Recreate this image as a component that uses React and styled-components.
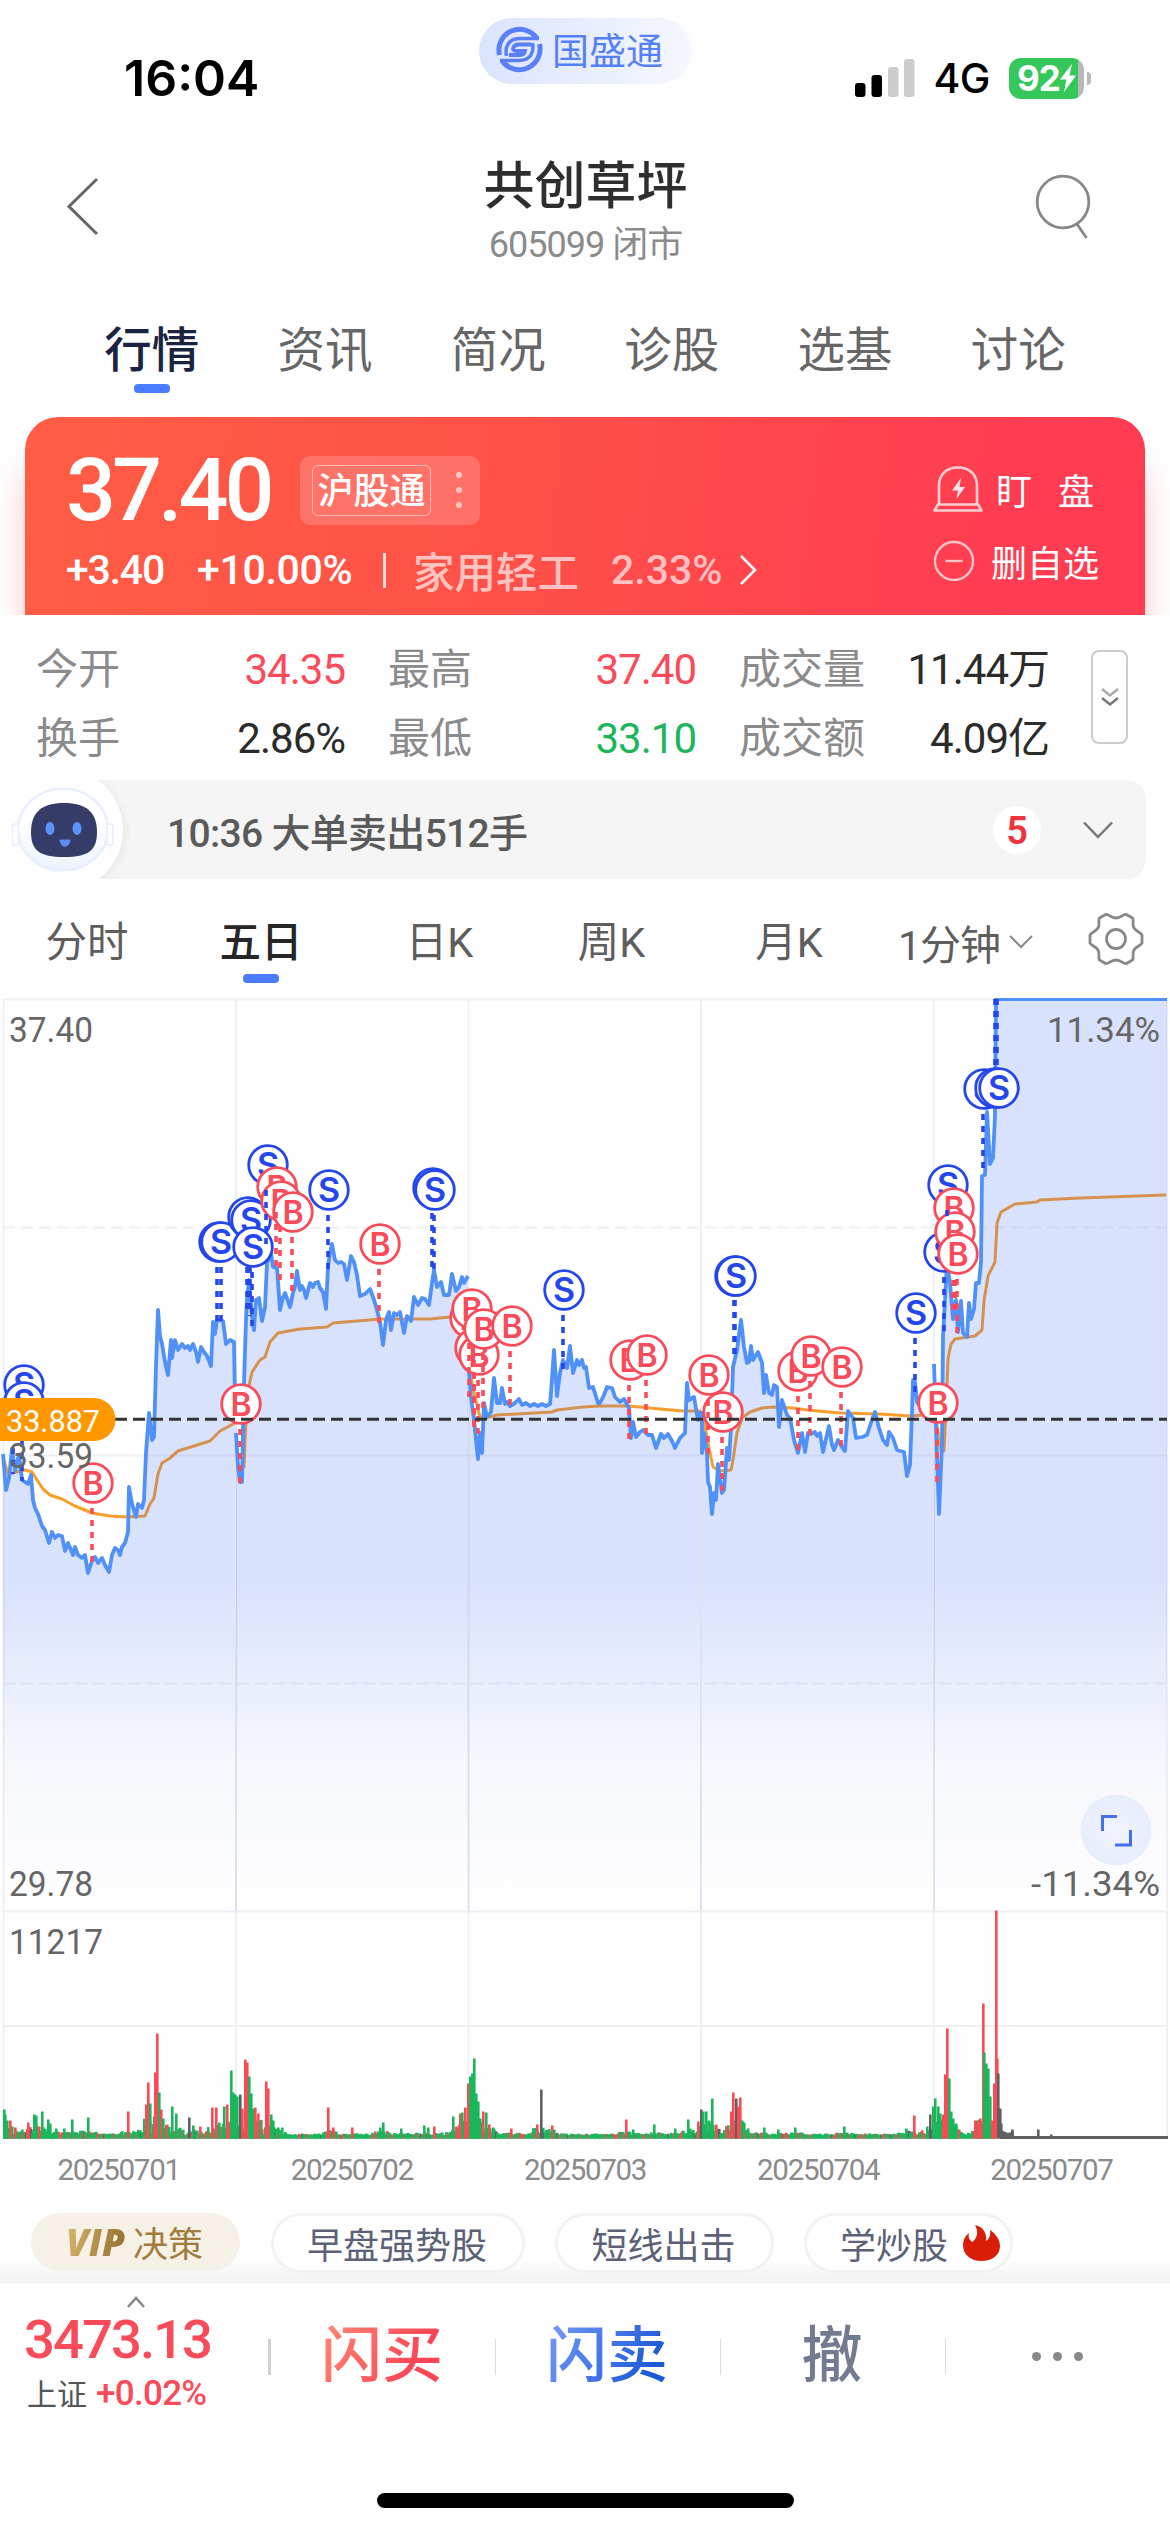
import React from 'react';
import styled, { createGlobalStyle, css } from 'styled-components';

const RED = '#f94b5a';
const GREEN = '#1bb55c';
const BLUE = '#4b7bff';

const GlobalStyle = createGlobalStyle`
  * {
    box-sizing: border-box;
  }

  body {
    margin: 0;
    background: #fefefe;
    font-family: Roboto, 'Noto Sans CJK SC', sans-serif;
    color: #333;
  }

  svg {
    display: block;
    flex: none;
  }
`;

const Page = styled.div`
  width: 1170px;
  height: 2532px;
  display: flex;
  flex-direction: column;
  overflow: hidden;
  background: #fefefe;
`;

/* ---------- status bar ---------- */

const StatusBar = styled.div`
  display: grid;
  grid-template-columns: 1fr 213px 1fr;
  height: 120px;
  padding: 18px 79px 0 124px;
  font-family: Inter, sans-serif;
  color: #000;
`;

const Clock = styled.div`
  padding-top: 30px;
  font-size: 50px;
  font-weight: 600;
  line-height: 60px;
`;

const BrandPill = styled.div`
  width: 213px;
  height: 66px;
  margin-left: -22px;
  padding: 0 0 4px 17px;
  display: flex;
  align-items: center;
  gap: 9px;
  border-radius: 33px;
  background: linear-gradient(90deg, #dae4fd, #f6f8ff);
  color: #5580f7;
  font-family: 'Noto Sans CJK SC', sans-serif;
  font-size: 37px;
  line-height: 60px;
`;

const StatusRight = styled.div`
  display: flex;
  justify-content: flex-end;
  align-items: center;
  height: 60px;
  margin-top: 30px;
`;

const Network = styled.span`
  margin: 0 19px 0 18px;
  font-size: 41px;
  font-weight: 500;
  letter-spacing: -0.5px;
`;

const Battery = styled.div`
  width: 75px;
  height: 41px;
  display: flex;
  align-items: center;
  justify-content: center;
  border-radius: 12px;
  background: linear-gradient(90deg, #35c759 69px, #b9b9bb 69px);
  color: #fff;
  font-size: 35px;
  font-weight: 700;
  letter-spacing: -1px;
`;

const BatteryNub = styled.div`
  width: 4px;
  height: 13px;
  margin-left: 3px;
  border-radius: 0 4px 4px 0;
  background: #b9b9bb;
`;

/* ---------- header ---------- */

const Header = styled.header`
  height: 172px;
  padding: 0 79px 0 66px;
  display: flex;
  justify-content: space-between;
`;

const TitleBlock = styled.div`
  display: flex;
  flex-direction: column;
  align-items: center;
  padding-top: 35px;
  margin-left: 36px;
`;

const StockName = styled.h1`
  margin: 0;
  font-size: 51px;
  font-weight: 500;
  line-height: 64px;
  color: #2e2e2e;
`;

const StockCode = styled.div`
  margin-top: 4px;
  font-size: 36px;
  line-height: 44px;
  color: #8b8b8b;
  letter-spacing: -1px;
`;

const MainTabs = styled.nav`
  display: flex;
  height: 125px;
  padding: 0 65px;
`;

const MainTab = styled.div`
  flex: 1;
  display: flex;
  flex-direction: column;
  align-items: center;
  padding-top: 28px;
  font-size: 47.5px;
  line-height: 62px;
  color: ${(p) => (p.$active ? '#1b2340' : '#666')};
  font-weight: ${(p) => (p.$active ? 500 : 400)};
`;

const Underline = styled.div`
  width: 36px;
  height: 9px;
  margin-top: 2px;
  border-radius: 4px;
  background: ${BLUE};
`;

/* ---------- price card ---------- */

const CardWrap = styled.div`
  height: 198px;
  padding: 0 25px;
  overflow: hidden;
`;

const Card = styled.section`
  height: 198px;
  padding: 33px 48px 0 41px;
  display: flex;
  justify-content: space-between;
  border-radius: 33px 33px 0 0;
  background: linear-gradient(97deg, #ff5d45 0%, #ff5148 42%, #ff3c51 88%);
  box-shadow: 0 40px 36px -10px rgba(255, 70, 75, 0.55);
  color: #fff;
`;

const PriceRow = styled.div`
  display: flex;
  align-items: center;
  height: 80px;
`;

const Price = styled.div`
  width: 234px;
  font-size: 88px;
  font-weight: 500;
  line-height: 80px;
  letter-spacing: -4px;
`;

const TagBox = styled.div`
  display: flex;
  align-items: center;
  width: 180px;
  height: 69px;
  padding-left: 12px;
  border-radius: 10px;
  background: rgba(255, 255, 255, 0.18);
`;

const Tag = styled.div`
  width: 119px;
  height: 51px;
  border: 1.5px solid rgba(255, 255, 255, 0.5);
  border-radius: 6px;
  font-size: 36px;
  font-weight: 500;
  line-height: 53px;
  text-align: center;
`;

const Dots = styled.div`
  display: flex;
  flex-direction: ${(p) => (p.$row ? 'row' : 'column')};
  gap: ${(p) => p.$gap}px;
  margin-left: ${(p) => p.$left || 0}px;

  i {
    width: ${(p) => p.$size}px;
    height: ${(p) => p.$size}px;
    border-radius: 50%;
    background: ${(p) => p.$color};
  }
`;

const ChangeRow = styled.div`
  display: flex;
  align-items: center;
  height: 50px;
  margin-top: 15px;
  font-size: 41px;
  letter-spacing: -0.6px;
  white-space: nowrap;
`;

const Change = styled.span`
  width: ${(p) => p.$w}px;
  font-weight: 500;
  letter-spacing: ${(p) => p.$ls}px;
`;

const Bar = styled.span`
  width: 3px;
  height: 35px;
  margin-right: 27px;
  background: rgba(255, 255, 255, 0.8);
`;

const Sector = styled.span`
  width: ${(p) => p.$w}px;
  font-size: ${(p) => p.$size || 41}px;
  font-weight: 500;
  letter-spacing: 0;
  color: rgba(255, 255, 255, 0.66);
`;

const CardActions = styled.div`
  display: flex;
  flex-direction: column;
  gap: 24px;
  width: 164px;
  padding-top: 15px;
`;

const CardAction = styled.div`
  display: flex;
  align-items: center;
  height: 48px;
  font-size: 36px;
  white-space: nowrap;

  span {
    margin-left: ${(p) => p.$gap}px;
  }
`;

/* ---------- quote stats ---------- */

const Stats = styled.section`
  display: flex;
  height: 165px;
  padding: 20px 42px 0 36px;
`;

const StatGrid = styled.div`
  width: 1013px;
  display: grid;
  grid-template-columns: 309px 351px 353px;
  grid-auto-rows: 69px;
`;

const Stat = styled.div`
  display: flex;
  justify-content: space-between;
  padding-left: ${(p) => (p.$first ? 0 : 43)}px;
  font-size: 42px;
  line-height: 69px;
  color: #8b8b8b;

  b {
    font-weight: 400;
    font-size: 42px;
    color: ${(p) => p.$color || '#2b2b2b'};
    letter-spacing: -1px;
  }
`;

const ExpandButton = styled.div`
  display: flex;
  align-items: center;
  justify-content: center;
  width: 38px;
  height: 94px;
  margin: 15px 0 0 42px;
  border: 2.5px solid #cbcbcb;
  border-radius: 8px;
`;

const AlertBar = styled.div`
  display: flex;
  align-items: center;
  width: 1146px;
  height: 99px;
  border-radius: 0 20px 20px 0;
  background: #f5f5f5;
  overflow: hidden;
`;

const AlertText = styled.div`
  width: 862px;
  padding-left: 36px;
  font-size: 39px;
  font-weight: 500;
  color: #5a5a5a;
  letter-spacing: -0.7px;
`;

const AlertCount = styled.div`
  width: 48px;
  height: 48px;
  margin-right: 42px;
  border-radius: 50%;
  background: #fff;
  color: #f0343f;
  font-size: 38px;
  font-weight: 600;
  line-height: 51px;
  text-align: center;
`;

/* ---------- period tabs ---------- */

const Periods = styled.nav`
  display: flex;
  height: 119px;
  padding: 35px 0 0;
`;

const Period = styled.div`
  display: flex;
  flex-direction: column;
  align-items: center;
  width: ${(p) => p.$w}px;
  font-size: 41.5px;
  line-height: 58px;
  color: #5e5e5e;
  white-space: nowrap;

  ${(p) =>
    p.$active &&
    css`
      color: #262626;
      font-weight: 500;
    `}
`;

const MinutePicker = styled.div`
  display: flex;
  align-items: center;
  gap: 9px;
  width: 190px;
  height: 56px;
  padding-left: 12px;
  font-size: 41px;
  letter-spacing: -1px;
  color: #5e5e5e;
  white-space: nowrap;
`;

const Dates = styled.div`
  display: flex;
  height: 55px;
  padding: 0 2px;
  font-size: 29.5px;
  line-height: 60px;
  color: #8a8a8a;
  letter-spacing: -1.3px;

  span {
    flex: 1;
    text-align: center;
  }
`;

/* ---------- chips and footer ---------- */

const Chips = styled.div`
  display: flex;
  align-items: flex-start;
  height: 88px;
  padding: 18px 0 0 31px;
  background: linear-gradient(180deg, #fefefe 64px, #f1f1f1 88px);
`;

const Chip = styled.div`
  display: flex;
  align-items: center;
  justify-content: center;
  width: ${(p) => p.$w}px;
  height: 60px;
  margin-right: 30px;
  padding: 0 2px 1px 0;
  border: 3px solid #f2f2f4;
  border-radius: 30px;
  background: #fefefe;
  color: #5d6178;
  font-size: 36px;
  white-space: nowrap;

  svg {
    margin-left: 15px;
  }

  ${(p) =>
    p.$hot &&
    css`
      justify-content: flex-start;
      padding-left: 33px;
    `}

  ${(p) =>
    p.$vip &&
    css`
      height: 58px;
      margin-right: 31px;
      border: 0;
      background: #f5f1e6;
      color: #a07d3c;
      font-size: 35px;
    `}
`;

const Vip = styled.b`
  margin-right: 5px;
  padding-right: 3px;
  font-family: 'Open Sans', sans-serif;
  font-size: 37px;
  font-style: italic;
  font-weight: 800;
  background: linear-gradient(100deg, #d9b76c, #8c6a2a);
  background-clip: text;
  color: transparent;
`;

const Footer = styled.footer`
  height: 249px;
  display: flex;
  flex-direction: column;
  justify-content: space-between;
  align-items: center;
  padding-bottom: 24px;
`;

const FooterRow = styled.div`
  display: flex;
  width: 1170px;
`;

const IndexBox = styled.div`
  width: 268px;
  padding: 13px 0 0 24px;
  color: ${RED};

  svg {
    margin-left: 102px;
  }
`;

const IndexValue = styled.div`
  font-size: 54.5px;
  font-weight: 500;
  line-height: 62px;
  letter-spacing: -2px;
`;

const IndexChange = styled.div`
  display: flex;
  align-items: baseline;
  gap: 9px;
  margin-left: 3px;
  font-size: 35px;
  font-weight: 500;
  line-height: 48px;
  letter-spacing: -0.7px;

  span {
    font-size: 30px;
    font-weight: 400;
    letter-spacing: 0;
    color: #555;
  }
`;

const TradeButton = styled.div`
  flex: 1;
  display: flex;
  align-items: center;
  justify-content: center;
  height: 36px;
  margin-top: 56px;
  padding: 0 2px 2px 0;
  border-left: ${(p) => (p.$bold ? '3px solid #d2d2d2' : '1px solid #dcdcdc')};
  font-size: 61px;
  font-weight: 500;

  span {
    line-height: 80px;
    background: ${(p) => p.$fill};
    background-clip: text;
    color: transparent;
  }
`;

const HomeIndicator = styled.div`
  width: 417px;
  height: 15px;
  border-radius: 8px;
  background: #000;
`;

/* ---------- data ---------- */

const TABS = ['行情', '资讯', '简况', '诊股', '选基', '讨论'];

const STATS = [
  ['今开', '34.35', RED],
  ['最高', '37.40', RED],
  ['成交量', '11.44万'],
  ['换手', '2.86%'],
  ['最低', '33.10', GREEN],
  ['成交额', '4.09亿'],
];

const PERIODS = [
  ['分时', 174],
  ['五日', 174],
  ['日K', 183],
  ['周K', 161],
  ['月K', 194],
];

const DAYS = ['20250701', '20250702', '20250703', '20250704', '20250707'];

// one polyline per trading day
const PRICE = [
  '3,1454 6,1490 9,1478 12,1449 15,1470 19,1455 22,1480 25,1482 28,1484 31,1475 33,1500 35,1508 38,1514 42,1526 45,1530 49,1543 52,1532 55,1538 58,1535 62,1536 65,1551 68,1543 73,1555 75,1547 78,1555 82,1558 85,1555 88,1573 92,1561 95,1557 98,1563 102,1558 105,1565 109,1572 112,1555 115,1548 118,1550 120,1555 122,1547 125,1543 128,1532 129,1487 132,1504 136,1517 138,1504 142,1508 144,1500 146,1453 149,1413 152,1440 154,1437 156,1366 158,1310 160,1336 162,1344 165,1362 168,1375 171,1340 172,1358 175,1340 178,1350 182,1344 185,1348 188,1346 190,1350 193,1344 196,1352 198,1362 201,1347 204,1352 207,1356 211,1366 213,1322 215,1334 217,1320 223,1321 226,1344 230,1340 234,1342 235,1400',
  '236,1433 238,1467 240,1482 242,1482 244,1383 246,1320 247,1300 249,1280 252,1317 254,1330 256,1300 259,1298 262,1321 265,1307 267,1263 271,1253 273,1267 277,1268 280,1310 283,1297 285,1293 290,1307 293,1293 295,1287 297,1271 300,1290 302,1286 304,1290 306,1298 310,1283 313,1287 315,1283 318,1282 320,1288 323,1292 326,1309 328,1267 330,1253 332,1244 335,1260 338,1263 341,1262 344,1264 347,1280 351,1256 354,1262 357,1275 360,1296 365,1294 370,1289 374,1300 377,1310 380,1322 383,1345 386,1320 389,1312 391,1330 394,1313 397,1315 400,1312 404,1333 407,1316 411,1321 414,1297 418,1305 422,1298 425,1299 429,1305 432,1283 434,1270 437,1287 441,1282 444,1295 449,1295 452,1274 456,1291 459,1287 462,1277 464,1283 468,1276',
  '469,1372 471,1397 474,1420 478,1459 480,1433 482,1453 484,1403 487,1417 491,1412 494,1378 497,1403 500,1403 502,1388 505,1404 507,1402 510,1406 515,1403 519,1399 522,1405 526,1403 530,1406 534,1404 538,1406 542,1404 546,1406 550,1404 551,1393 554,1350 557,1396 560,1373 563,1360 567,1368 570,1346 573,1373 577,1360 579,1365 582,1360 584,1368 586,1367 589,1388 593,1387 598,1403 600,1403 604,1395 607,1387 612,1388 615,1397 620,1402 624,1399 629,1408 631,1438 633,1422 636,1437 640,1432 643,1430 648,1435 652,1435 656,1448 661,1434 664,1438 668,1434 672,1441 675,1448 680,1438 685,1433 687,1383 689,1400 694,1397 698,1420 700,1411',
  '702,1411 702,1453 704,1433 707,1453 708,1482 710,1487 712,1514 714,1493 716,1500 718,1464 722,1493 724,1490 727,1448 729,1460 731,1427 733,1367 737,1350 741,1320 744,1347 747,1363 749,1362 751,1346 753,1360 758,1352 762,1363 764,1393 766,1375 769,1393 772,1395 774,1385 777,1387 779,1427 782,1400 787,1415 790,1418 794,1440 798,1453 802,1433 805,1452 808,1433 811,1434 815,1432 817,1436 820,1433 823,1452 829,1426 832,1445 834,1450 838,1440 842,1447 845,1451 848,1411 853,1418 856,1438 862,1437 867,1435 872,1420 875,1412 879,1428 883,1440 887,1445 889,1432 893,1438 897,1450 904,1452 907,1476 910,1465 912,1413 913,1380 915,1382 917,1402 924,1412 933,1405',
  '934,1364 936,1426 939,1514 942,1444 943,1337 945,1301 947,1263 950,1283 953,1319 956,1300 958,1332 961,1301 963,1333 967,1337 969,1303 971,1319 974,1309 976,1283 979,1283 981,1262 982,1176 985,1175 987,1112 990,1164 993,1158 995,1116 996,999 1167,999',
];

const AVERAGE = [
  '3,1457 8,1474 25,1470 32,1472 37,1480 43,1489 50,1495 62,1499 75,1506 92,1513 110,1516 127,1517 145,1516 150,1504 154,1498 158,1474 162,1463 170,1458 178,1451 194,1446 210,1441 220,1431 235,1423',
  '237,1455 239,1468 244,1467 246,1420 248,1390 252,1372 260,1360 265,1357 270,1342 278,1333 300,1329 327,1327 333,1323 357,1321 380,1319 430,1319 450,1317 468,1317',
  '470,1373 475,1397 480,1417 490,1417 497,1415 552,1412 557,1410 583,1407 600,1406 627,1406 640,1407 660,1409 683,1411 701,1411',
  '703,1416 705,1427 710,1453 713,1467 720,1471 731,1470 733,1460 737,1433 742,1418 750,1412 762,1408 773,1407 793,1408 807,1410 840,1413 880,1414 910,1416 923,1415 933,1414',
  '935,1400 937,1425 941,1451 944,1451 946,1409 948,1359 951,1344 955,1339 975,1336 982,1330 984,1301 988,1276 995,1262 997,1223 1001,1212 1015,1204 1037,1202 1040,1200 1080,1198 1166,1195',
];

// side, centre x, centre y, then the stem: x, from, to
const MARKS = [
  ['S', 24, 1385, 13, 1448, 1474],
  ['S', 24, 1402, 22, 1441, 1481],
  ['B', 93, 1483, 92, 1508, 1562],
  ['S', 219, 1242, 217, 1267, 1321],
  ['S', 221, 1242, 221, 1267, 1321],
  ['S', 248, 1217, 247, 1267, 1311],
  ['S', 251, 1220, 250, 1267, 1316],
  ['S', 268, 1165, 266, 1190, 1244],
  ['S', 253, 1247, 252, 1272, 1326],
  ['B', 277, 1187, 276, 1212, 1266],
  ['B', 281, 1201, 280, 1226, 1280],
  ['B', 293, 1212, 292, 1237, 1291],
  ['S', 329, 1190, 328, 1215, 1269],
  ['B', 380, 1244, 379, 1269, 1323],
  ['S', 433, 1188, 432, 1213, 1267],
  ['S', 435, 1190, 434, 1215, 1269],
  ['B', 241, 1404, 240, 1429, 1483],
  ['B', 470, 1318, 469, 1343, 1397],
  ['B', 472, 1309, 474, 1360, 1423],
  ['B', 475, 1348, 474, 1373, 1427],
  ['B', 479, 1355, 478, 1380, 1434],
  ['B', 484, 1329, 483, 1354, 1408],
  ['B', 512, 1326, 510, 1351, 1405],
  ['S', 564, 1290, 563, 1315, 1369],
  ['B', 630, 1360, 629, 1385, 1439],
  ['B', 647, 1355, 646, 1380, 1434],
  ['B', 709, 1375, 708, 1400, 1454],
  ['B', 723, 1412, 722, 1437, 1491],
  ['S', 735, 1276, 734, 1300, 1354],
  ['S', 736, 1276, 735, 1300, 1354],
  ['B', 798, 1371, 798, 1396, 1450],
  ['B', 811, 1356, 810, 1381, 1435],
  ['B', 842, 1367, 841, 1392, 1446],
  ['S', 916, 1313, 915, 1338, 1392],
  ['B', 938, 1403, 937, 1428, 1482],
  ['S', 944, 1252, 944, 1277, 1331],
  ['S', 948, 1185, 947, 1210, 1216],
  ['B', 954, 1208, 953, 1280, 1310],
  ['B', 955, 1232, 955, 1280, 1316],
  ['B', 958, 1254, 957, 1279, 1333],
  ['S', 984, 1089, 983, 1114, 1168],
  ['S', 995, 1088, 995, 999, 1066],
  ['S', 999, 1088, 997, 999, 1066],
];

const VOLUME_COLORS = { r: '#fb4a55', g: GREEN, k: '#5f6062' };

// x:height:colour
const SPIKES =
  '4:29:g 5:24:g 7:18:g 10:18:r 15:11:r 22:9:g 28:16:r 34:24:g 36:23:g 39:12:r 42:27:g 48:19:g 50:15:g 56:10:g 64:10:g 72:19:g 82:8:g 88:21:g 128:27:r 144:20:g 146:34:r 148:56:r 150:35:g 154:22:g 155:66:r 157:105:r 159:46:g 161:29:r 163:20:g 166:12:r 172:32:g 176:25:g 179:10:g 189:21:k 193:13:g 200:12:r 212:31:r 216:31:r 219:16:g 224:32:g 227:34:r 231:68:g 233:46:g 235:44:g 237:42:g 240:44:k 242:30:r 245:79:r 247:76:r 249:62:g 251:45:g 253:30:g 255:31:r 258:25:r 260:18:g 266:57:r 268:50:r 271:24:g 273:18:g 278:11:g 282:11:g 328:31:r 333:11:r 352:11:r 380:11:g 383:16:g 401:10:g 424:13:g 428:11:g 434:12:r 453:22:g 456:12:r 460:25:r 462:26:g 465:31:r 468:55:r 470:62:g 472:65:g 474:80:g 476:45:g 478:37:g 480:20:g 483:27:r 486:26:g 489:14:r 493:11:g 511:10:r 537:14:r 541:49:k 552:13:r 554:9:g 626:19:r 633:9:g 654:14:g 675:10:g 688:19:g 690:10:g 698:17:r 701:29:k 703:27:g 706:27:g 709:18:g 712:40:g 716:14:r 726:12:r 731:27:r 733:46:r 736:40:k 738:32:r 740:41:r 742:18:g 748:10:g 764:11:g 778:9:g 795:11:g 844:12:g 906:10:g 914:23:r 930:24:k 933:32:g 935:40:g 938:32:g 940:25:g 943:24:r 945:64:r 947:110:r 949:60:g 951:27:g 953:20:g 956:12:g 975:18:r 980:20:r 983:135:r 984:86:g 986:75:g 988:70:g 990:42:g 992:18:r 994:55:r 996:228:r 997:80:r 998:65:k 1000:30:k 1001:15:k 1012:9:k 1038:9:k 1051:4:k';

const spikes = SPIKES.split(' ').map((s) => {
  const [x, h, c] = s.split(':');
  return [Number(x), Number(h), c];
});

// low trades between the spikes
const baseVolume = [];
for (let x = 4; x < 996; x += 1) {
  const n = Math.abs(Math.sin(x * 12.9898) * 43758.5453) % 1;
  const m = Math.abs(Math.sin(x * 78.233) * 12543.123) % 1;
  const near = spikes.reduce((s, [sx, sh]) => s + (Math.abs(sx - x) < 9 ? sh : 0), 0);
  const h = 3 + n * (2 + Math.min(near * 0.09, 14));
  baseVolume.push([x, h, m < 0.75 ? 'g' : m < 0.96 ? 'r' : 'k']);
}

const BOTTOM = 2138.5;

const areaOf = (line) => {
  const pts = line.split(' ');
  const x0 = pts[0].split(',')[0];
  const x1 = pts[pts.length - 1].split(',')[0];
  return `${x0},1911 ${line} ${x1},1911`;
};

/* ---------- drawings ---------- */

const Mark = ({ side, x, y }) => {
  const color = side === 'S' ? '#2446ec' : RED;
  return (
    <g>
      <circle cx={x} cy={y} r="19.3" fill="#fff" stroke={color} strokeWidth="2.8" />
      <text
        x={x}
        y={y + 12}
        textAnchor="middle"
        fontFamily="Inter, sans-serif"
        fontSize={side === 'S' ? 34 : 32}
        fontWeight="600"
        fill={color}
      >
        {side}
      </text>
    </g>
  );
};

const Label = ({ x, y, w, children, fill = '#666', size = 35 }) => (
  <text
    x={x}
    y={y}
    fontSize={size}
    fill={fill}
    textLength={w}
    lengthAdjust="spacingAndGlyphs"
  >
    {children}
  </text>
);

const Chart = () => (
  <svg width="1170" height="1142" viewBox="0 998 1170 1142">
    <defs>
      <linearGradient id="area" gradientUnits="userSpaceOnUse" x1="0" y1="999" x2="0" y2="1911">
        <stop offset="0" stopColor="#265afa" stopOpacity="0.17" />
        <stop offset="0.64" stopColor="#265afa" stopOpacity="0.17" />
        <stop offset="0.84" stopColor="#265afa" stopOpacity="0.035" />
        <stop offset="1" stopColor="#265afa" stopOpacity="0" />
      </linearGradient>
      <radialGradient id="fs">
        <stop offset="0" stopColor="#f1f4ff" />
        <stop offset="1" stopColor="#e8edfd" />
      </radialGradient>
    </defs>

    <g stroke="#f0f0f4" strokeWidth="2" fill="none">
      <path d="M3 999.5H1167M3 1455.5H1167M3 1911.5H1167M3 2026H1167" />
      <path d="M3.5 999V2139M236 999V2139M468.5 999V2139M701 999V2139M934 999V2139M1167 999V2139" />
      <path d="M3 1227.5H1167M3 1683.5H1167" strokeDasharray="12 6" />
    </g>

    {AVERAGE.map((line) => (
      <polyline key={line} points={line} fill="none" stroke="#f99d2c" strokeWidth="3" strokeLinejoin="round" />
    ))}
    {PRICE.map((line) => (
      <polygon key={line} points={areaOf(line)} fill="url(#area)" />
    ))}
    <path d="M236 1420V1911M468.5 1380V1911M701 1420V1911M934 1400V1911" stroke="#8fa4dc" strokeOpacity="0.22" strokeWidth="1.5" />
    {PRICE.map((line) => (
      <polyline key={line} points={line} fill="none" stroke="#4f90f9" strokeWidth="3.8" strokeLinejoin="round" />
    ))}

    {MARKS.map(([side, x, y], i) => (
      <Mark key={i} side={side} x={x} y={y} />
    ))}
    {MARKS.map(([side, , , sx, from, to], i) => (
      <path
        key={i}
        d={`M${sx} ${from}V${to}`}
        stroke={side === 'S' ? '#2446ec' : RED}
        strokeWidth="3.6"
        strokeDasharray="6 6"
      />
    ))}

    <path d="M115 1419.3H1167" stroke="#333" strokeWidth="3" strokeDasharray="12 6" />
    <path d="M0 1398H94A21.5 21.5 0 0 1 94 1441H0Z" fill="#ff9800" />
    <Label x="6" y="1432" w="94" fill="#fff" size={32}>33.887</Label>

    <Label x="9" y="1041.5" w="84">37.40</Label>
    <Label x="9" y="1467.5" w="84">33.59</Label>
    <Label x="9" y="1895.5" w="84">29.78</Label>
    <Label x="9" y="1953.5" w="94">11217</Label>
    <Label x="1047" y="1041.5" w="113">11.34%</Label>
    <Label x="1031" y="1895.5" w="129">-11.34%</Label>

    <circle cx="1116" cy="1830" r="35.5" fill="url(#fs)" />
    <path d="M1102.5 1831V1816.5H1117M1115 1845H1130.5V1830" fill="none" stroke="#4470f0" strokeWidth="3" />

    {[...baseVolume, ...spikes].map(([x, h, c], i) => (
      <rect key={i} x={x - 1} y={BOTTOM - h} width="2.6" height={h} fill={VOLUME_COLORS[c]} />
    ))}
    <path d="M1000 2137.5H1168" stroke="#5f6062" strokeWidth="3" />
    <path d="M1001 2137V2130L1008 2133L1014 2131V2137Z" fill="#5f6062" />
  </svg>
);

const BrandIcon = () => (
  <svg width="47" height="47" viewBox="0 0 47 47" fill="none" stroke="#5a7ff8">
    <path d="M3.5 29A20.8 20.8 0 0 1 41 12.5" strokeWidth="5" />
    <path d="M43.500 18A20.800 20.800 0 0 1 6 34.500" strokeWidth="5" />
    <path d="M43 12.500H24C13 12.500 8.500 20 10.500 30" strokeWidth="3.500" />
    <path d="M4 34.500H23C34 34.500 38.500 27 36.500 17" strokeWidth="3.500" />
    <path d="M35 18.500H23C17 18.500 14.500 25 20 25H29C28.500 28 27 29 24 29H13" strokeWidth="3.800" />
  </svg>
);

const Robot = () => (
  <svg width="131" height="99" viewBox="0 0 131 99">
    <defs>
      <linearGradient id="head" x1="0" y1="0" x2="0" y2="1">
        <stop offset="0.4" stopColor="#fff" />
        <stop offset="1" stopColor="#ecf2ff" />
      </linearGradient>
      <radialGradient id="halo">
        <stop offset="0.84" stopColor="#e8e8ea" />
        <stop offset="1" stopColor="#f5f5f5" />
      </radialGradient>
    </defs>
    <circle cx="65" cy="52" r="66" fill="url(#halo)" />
    <rect width="40" height="99" fill="#fefefe" />
    <circle cx="61" cy="50" r="62" fill="#fefefe" />
    <ellipse cx="63" cy="49.5" rx="45" ry="41" fill="url(#head)" stroke="#e9effe" strokeWidth="2.5" />
    <rect x="12.5" y="44" width="6" height="21" rx="2" fill="#fff" stroke="#e6edfd" strokeWidth="1.5" />
    <rect x="107" y="44" width="6" height="21" rx="2" fill="#fff" stroke="#e6edfd" strokeWidth="1.5" />
    <path d="M64 23C86 23 97 32 97 52C97 70 89 77 64 77C39 77 31 70 31 52C31 32 42 23 64 23Z" fill="#363c68" />
    <ellipse cx="50" cy="48.5" rx="4.5" ry="6.5" fill="#5b93fb" />
    <ellipse cx="77" cy="48.5" rx="4.5" ry="6.5" fill="#5b93fb" />
    <path d="M59.5 59.5H70.5C70 69 60 69 59.5 59.5Z" fill="#5b8cf5" />
  </svg>
);

const Chevron = ({ w, h, d, color, width = 2.5 }) => (
  <svg width={w} height={h} fill="none" stroke={color} strokeWidth={width}>
    <path d={d} />
  </svg>
);

const App = () => {
  return (
    <>
      <GlobalStyle />
      <Page>
        <StatusBar>
          <Clock>16:04</Clock>
          <BrandPill>
            <BrandIcon />
            国盛通
          </BrandPill>
          <StatusRight>
            <svg width="60" height="38" viewBox="0 0 60 38">
              <rect y="24" width="10.5" height="14" rx="3" />
              <rect x="16.5" y="16" width="10.5" height="22" rx="3" />
              <rect x="33" y="8" width="10.5" height="30" rx="3" fill="#ccc" />
              <rect x="49" width="10.5" height="38" rx="3" fill="#ccc" />
            </svg>
            <Network>4G</Network>
            <Battery>
              92
              <svg width="16" height="28" viewBox="0 0 16 28">
                <path d="M12 0L0 15.5H6.5L4 28L16 11.5H9.5Z" fill="#fff" />
              </svg>
            </Battery>
            <BatteryNub />
          </StatusRight>
        </StatusBar>

        <Header>
          <svg width="34" height="172" fill="none" stroke="#666" strokeWidth="3">
            <path d="M31 59L3 86.5L31 114" />
          </svg>
          <TitleBlock>
            <StockName>共创草坪</StockName>
            <StockCode>605099 闭市</StockCode>
          </TitleBlock>
          <svg width="56" height="172" fill="none" stroke="#888" strokeWidth="2.8">
            <circle cx="28" cy="82" r="25.8" />
            <path d="M42 104L51.5 118" />
          </svg>
        </Header>

        <MainTabs>
          {TABS.map((tab, i) => (
            <MainTab key={tab} $active={i === 0}>
              {tab}
              {i === 0 && <Underline />}
            </MainTab>
          ))}
        </MainTabs>

        <CardWrap>
          <Card>
            <div>
              <PriceRow>
                <Price>37.40</Price>
                <TagBox>
                  <Tag>沪股通</Tag>
                  <Dots $size={6} $gap={9} $left={25} $color="rgba(255,255,255,.6)">
                    <i />
                    <i />
                    <i />
                  </Dots>
                </TagBox>
              </PriceRow>
              <ChangeRow>
                <Change $w={131} $ls={-1.2}>+3.40</Change>
                <Change $w={186} $ls={-0.3}>+10.00%</Change>
                <Bar />
                <Sector $w={198} $size={41.5}>家用轻工</Sector>
                <Sector $w={128}>2.33%</Sector>
                <Chevron w={20} h={32} d="M2 2L16 16L2 30" color="#fff" />
              </ChangeRow>
            </div>
            <CardActions>
              <CardAction $gap={13}>
                <svg width="50" height="46" viewBox="0 0 50 46" fill="none" stroke="rgba(255,255,255,.75)" strokeWidth="2.6">
                  <path d="M6 38V20C6 8 14 1.5 25 1.5S44 8 44 20V38" />
                  <path d="M5 38.5H45L48.5 44.5H1.5Z" strokeLinejoin="round" />
                  <path d="M28 12L19 24.5H25L23.5 33L32 21H26.5Z" fill="rgba(255,255,255,.85)" stroke="none" />
                </svg>
                <span style={{ wordSpacing: 17 }}>盯 盘</span>
              </CardAction>
              <CardAction $gap={16}>
                <svg width="42" height="42" fill="none" stroke="rgba(255,255,255,.7)" strokeWidth="2.3">
                  <circle cx="21" cy="21" r="19" />
                  <path d="M12.5 21H29.5" />
                </svg>
                <span>删自选</span>
              </CardAction>
            </CardActions>
          </Card>
        </CardWrap>

        <Stats>
          <StatGrid>
            {STATS.map(([name, value, color], i) => (
              <Stat key={name} $first={i % 3 === 0} $color={color}>
                {name}
                <b>{value}</b>
              </Stat>
            ))}
          </StatGrid>
          <ExpandButton>
            <svg width="20" height="20" fill="none" strokeWidth="2.5">
              <path d="M2 2L10 8.5L18 2" stroke="#aaa" />
              <path d="M2 11L10 17.5L18 11" stroke="#777" />
            </svg>
          </ExpandButton>
        </Stats>

        <AlertBar>
          <Robot />
          <AlertText>10:36 大单卖出512手</AlertText>
          <AlertCount>5</AlertCount>
          <Chevron w={30} h={18} d="M1 1.5L15 16L29 1.5" color="#777" />
        </AlertBar>

        <Periods>
          {PERIODS.map(([name, w]) => (
            <Period key={name} $w={w} $active={name === '五日'}>
              {name}
              {name === '五日' && <Underline />}
            </Period>
          ))}
          <MinutePicker>
            <span>1分钟</span>
            <Chevron w={24} h={14} d="M1 1L12 12L23 1" color="#888" width={2} />
          </MinutePicker>
          <svg width="56" height="54" viewBox="0 0 56 54" fill="none" stroke="#888" strokeWidth="2.8" strokeLinejoin="round" style={{ marginLeft: 12, marginTop: -2 }}>
            <path d="M17.5 2.5C20 1.5 22.5 6 28 6S36 1.5 38.5 2.5L44.5 6C46.5 8 43.5 12 46 16S53.5 20.5 54 23V31C53.5 33.5 48.5 34 46 38S46.5 46 44.5 48L38.5 51.5C36 52.5 33.5 48 28 48S20 52.5 17.5 51.5L11.5 48C9.5 46 12.5 42 10 38S2.5 33.5 2 31V23C2.5 20.5 7.5 20 10 16S9.5 8 11.5 6Z" />
            <circle cx="28" cy="27" r="9.5" />
          </svg>
        </Periods>

        <Chart />
        <Dates>
          {DAYS.map((day) => (
            <span key={day}>{day}</span>
          ))}
        </Dates>

        <Chips>
          <Chip $w={209} $vip>
            <Vip>VIP</Vip>决策
          </Chip>
          <Chip $w={254}>早盘强势股</Chip>
          <Chip $w={219}>短线出击</Chip>
          <Chip $w={209} $hot>
            学炒股
            <svg width="37" height="36" viewBox="0 0 37 36">
              <path d="M12 0C21 2 24 9 23 16C26 14 28 10 27 5C33 9 37 15 37 21C37 30 29 36 18.5 36S0 30 0 20C0 15 2 11 6 8C5 12 6 15 9 17C14 14 16 7 12 0Z" fill="#d81e06" />
            </svg>
          </Chip>
        </Chips>

        <Footer>
          <FooterRow>
            <IndexBox>
              <Chevron w={20} h={12} d="M2 11L10 2L18 11" color="#888" />
              <IndexValue>3473.13</IndexValue>
              <IndexChange>
                <span>上证</span>+0.02%
              </IndexChange>
            </IndexBox>
            <TradeButton $bold $fill="linear-gradient(120deg, #ff8a78, #fb4455 75%)">
              <span>闪买</span>
            </TradeButton>
            <TradeButton $fill="linear-gradient(120deg, #7c9dff, #1d5bd6 80%)">
              <span>闪卖</span>
            </TradeButton>
            <TradeButton $fill="#727b90">
              <span>撤</span>
            </TradeButton>
            <TradeButton>
              <Dots $row $size={9} $gap={12} $color="#888">
                <i />
                <i />
                <i />
              </Dots>
            </TradeButton>
          </FooterRow>
          <HomeIndicator />
        </Footer>
      </Page>
    </>
  );
};

export default App;
